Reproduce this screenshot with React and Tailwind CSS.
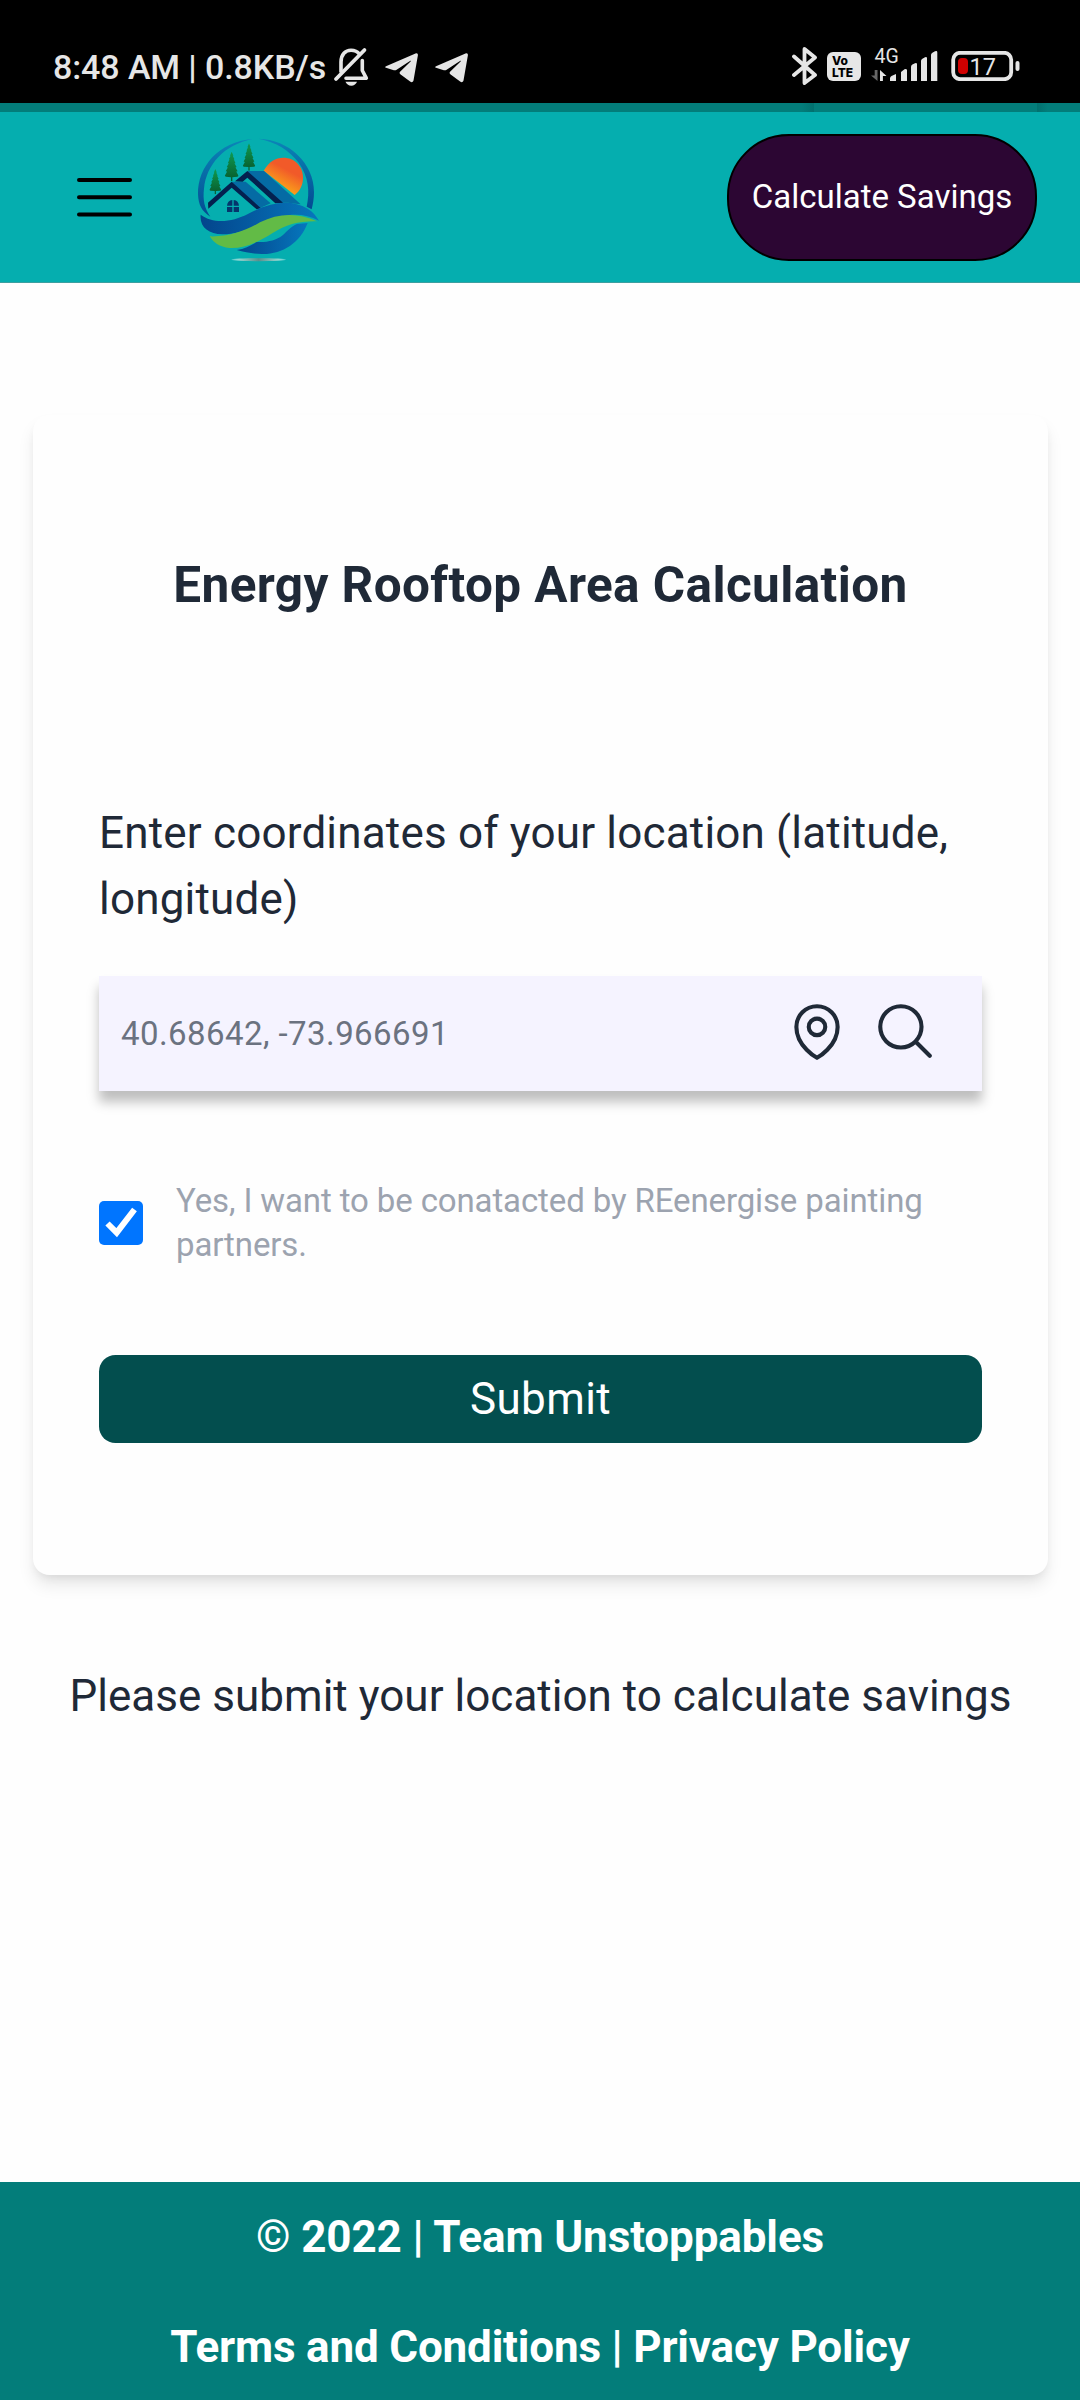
function Telegram() {
  return (
    <svg className="h-[32px] w-[35px]" viewBox="0 0 35 32" fill="#e6e6e6">
      <path d="M2 14.2 31.5 1.4c1.6-.6 2.6.2 2.4 1.9L29.6 28c-.4 2.2-1.8 2.7-3.5 1.5L16.300 22.300c-1-.8-1-1.700 0-2.700L26.600 9.600c.5-.7.100-1.100-.6-.7L12.600 17.800c-.9.6-1.800.7-2.800.4L2 15.800c-1.100-.4-1.100-1.100 0-1.600Z" />
    </svg>
  );
}

function MutedBell() {
  return (
    <svg className="h-[40px] w-[36px]" viewBox="0 0 36 40" fill="none" stroke="#e6e6e6" strokeWidth="3.600">
      <path d="M8 25.500V15C8 7.500 12.500 3.200 18 3.200c3.500 0 6.500 1.300 8.400 3.800" />
      <path d="M29.300 13.500v10l4 7.700H13" strokeLinejoin="round" strokeLinecap="round" />
      <path d="M3 32 31.500 3" strokeWidth="3.800" strokeLinecap="round" />
      <path d="M12.500 34.800h11.500c-.8 2.300-3 4-5.700 4s-5-1.700-5.800-4Z" fill="#e6e6e6" stroke="none" />
    </svg>
  );
}

function Signal() {
  return (
    <svg className="h-[38px] w-[67px]" viewBox="0 0 67 38" fill="#e6e6e6">
      <text x="3.500" y="17" fontSize="19.500" fontFamily="Roboto, sans-serif">4G</text>
      <path d="M6.500 24v11L0 29.500h3.700V24Z" fill="#666" />
      <path d="M9 35V24l6.500 6h-3.600v5Z" />
      <path d="M19 35v-2.500q0-1.500 1.500-2.400l4.500-2V35ZM30 35V26l3.500-2.700q2.200-1.200 2.500 1V35ZM40 35V21q0-1.700 1.400-2.400l2.600-1.400q2-.9 2 1.200V35ZM50 35V15q0-1.600 1.400-2.300l2.600-1.400q2-.9 2 1.200V35ZM60 35V9q0-1.600 1.400-2.300L64 5.300q2.300-.9 2.300 1.200V35Z" />
    </svg>
  );
}

function StatusBar() {
  return (
    <div className="flex h-[103px] items-start bg-black pt-[46px] text-[#e6e6e6]">
      <div className="ml-[53px] mt-[1px] w-[280px] whitespace-nowrap text-[34px] font-medium leading-[40px] tracking-[-0.1px]">8:48 AM | 0.8KB/s</div>
      <div className="mt-[1px]"><MutedBell /></div>
      <div className="ml-[15px] mt-[6px]"><Telegram /></div>
      <div className="ml-[14.500px] mt-[6px]"><Telegram /></div>
      <svg className="ml-[323px] h-[40px] w-[26px]" viewBox="0 0 26 40" fill="none" stroke="#e6e6e6" strokeWidth="3.800" strokeLinecap="round" strokeLinejoin="round">
        <path d="M2 10.500 23 29 12.500 37V3L23 11.500 2 29" />
      </svg>
      <div className="ml-[9px] mt-[6px] flex h-[29px] w-[34px] flex-col justify-center rounded-[6px] bg-[#e6e6e6] pl-[5.500px] font-['Inter'] text-[12px] font-extrabold leading-[12px] text-black">
        <span>Vo</span>
        <span>LTE</span>
      </div>
      <div className="ml-[10px]"><Signal /></div>
      <svg className="ml-[13px] mt-[5px] h-[30px] w-[70px]" viewBox="0 0 70 30">
        <rect x="2.200" y="1.800" width="58" height="26.400" rx="7" fill="none" stroke="#e6e6e6" strokeWidth="3.800" />
        <rect x="7" y="7" width="10" height="16" rx="4" fill="#d00000" />
        <rect x="64.500" y="10" width="4" height="10" rx="2" fill="#e6e6e6" />
        <text x="18.500" y="23.500" fontSize="23.500" fill="#e6e6e6" fontFamily="Roboto, sans-serif">17</text>
      </svg>
    </div>
  );
}

function Tree({ x, y, w, h }) {
  return (
    <svg x={x} y={y} width={w} height={h} viewBox="0 0 40 84" preserveAspectRatio="none">
      <path d="M20 0 25 12 23 12 28 22 26 22 31 33 28 33 34 44 31 45 37 56 33 57 40 70 36 72 22 73V84H18V73L4 72 0 70 7 57 3 56 9 45 6 44 12 33 9 33 14 22 12 22 17 12 15 12Z" fill="url(#tree)" />
    </svg>
  );
}

function Logo() {
  return (
    <svg className="size-[160px]" viewBox="0 0 480 480">
      <defs>
        <linearGradient id="tree" x1="0" y1="0" x2="0" y2="1">
          <stop offset="0" stopColor="#0f9a50" />
          <stop offset="1" stopColor="#075a2c" />
        </linearGradient>
        <linearGradient id="sun" x1="0.700" y1="0.200" x2="0.300" y2="0.900">
          <stop offset="0.200" stopColor="#f15a29" />
          <stop offset="1" stopColor="#fdb515" />
        </linearGradient>
        <linearGradient id="wave" x1="0" y1="0" x2="1" y2="0">
          <stop offset="0" stopColor="#03458c" />
          <stop offset="1" stopColor="#0677bd" />
        </linearGradient>
        <linearGradient id="ring" x1="0" y1="0" x2="0" y2="1">
          <stop offset="0" stopColor="#0b86b8" />
          <stop offset="1" stopColor="#034a92" />
        </linearGradient>
        <linearGradient id="ground" x1="0" y1="0" x2="1" y2="0">
          <stop offset="0" stopColor="#fff" stopOpacity="0.200" />
          <stop offset="0.150" stopColor="#8fd3ce" />
          <stop offset="0.500" stopColor="#5c8f8c" />
          <stop offset="0.850" stopColor="#8fd3ce" />
          <stop offset="1" stopColor="#fff" stopOpacity="0.200" />
        </linearGradient>
      </defs>
      <path d="M218 57C115 66 53 140 54 222c1 32 11 52 37 68-18-25-23-52-19-84 7-72 60-132 146-149Z" fill="url(#ring)" />
      <path d="M235 56c92 2 167 74 167 160 0 20-3 36-7 52l-15-8c10-46 6-90-24-132-29-38-67-62-121-72Z" fill="url(#ring)" />
      <path d="M251 152C268 124 286 113 310 113c34 0 59 26 59 60 0 21-8 38-25 52Z" fill="url(#sun)" />
      <Tree x="88" y="147" w="36" h="76" />
      <Tree x="134" y="95" w="42" h="88" />
      <Tree x="188" y="70" w="38" h="82" />
      <path d="M202 153H252L362 253C330 248 312 247 292 250Z" fill="#056ba4" />
      <path d="M155 185H197L272 250 232 268Z" fill="#056ba4" />
      <path d="M84 248 155 185 242 264 230 268 155 203 85 266ZM165 184 202 153 309 248 286 250 202 173 188 185Z" fill="#04204f" />
      <path d="M157 240V257H141C142 247 147 241 157 240ZM161 240c10 1 15 7 16 17H161ZM141 261H157V276H141ZM161 261H177V276H161Z" fill="#05356c" />
      <path d="M62 284C100 312 155 307 205 281c70-36 128-44 178-15 16 9 26 23 34 36-50-26-100-22-160 3-50 22-85 38-130 38-42-1-69-22-65-59Z" fill="url(#wave)" />
      <path d="M89 349C145 351 196 333 240 307c55-28 113-30 171-3-55-1-93 10-133 35-44 28-84 47-130 45-29-3-47-15-59-35Z" fill="#62bb46" />
      <path d="M383 309C360 370 305 404 245 402c-28-1-50-5-75-12 24-4 40-12 60-24 30 2 57-4 78-20 14-13 25-27 43-34Z" fill="url(#wave)" />
      <ellipse cx="236" cy="419" rx="82" ry="4.500" fill="url(#ground)" />
    </svg>
  );
}

function Header() {
  return (
    <header className="flex h-[171px] items-start border-b border-[#3d9fa0] bg-[#05aeaf]">
      <svg className="ml-[77px] mt-[65px] h-[41px] w-[55px]" viewBox="0 0 55 41" stroke="#000" strokeWidth="4" strokeLinecap="round">
        <path d="M2 3H53M2 20.300H53M2 37.500H53" />
      </svg>
      <div className="ml-[48px] mt-[8px]"><Logo /></div>
      <button className="ml-[387px] mt-[22px] h-[127px] w-[310px] whitespace-nowrap rounded-[62px] border-2 border-black bg-[#2c0633] pb-[2px] text-[33px] leading-[44px] text-white">Calculate Savings</button>
    </header>
  );
}

export default function App() {
  return (
    <div className="flex h-[2400px] w-[1080px] flex-col overflow-hidden bg-[#fefefe] font-['Roboto',sans-serif] text-[#1f2937]">
      <StatusBar />
      <div className="flex h-[9px] bg-[#037d7a]">
        <div className="w-[814px] bg-[linear-gradient(to_right,transparent_98.500%,#02706e)]" />
        <div className="w-[223px]" />
        <div className="flex-1 bg-[linear-gradient(to_right,#02706e,transparent_25%)]" />
      </div>
      <Header />
      <main className="flex flex-1 flex-col pl-[33px] pr-[32px] pt-[132px]">
        <section className="flex h-[1160px] flex-col rounded-[16.500px] bg-[#fefefe] px-[66px] pt-[132px] shadow-[0_11px_16.500px_-2.750px_rgba(0,0,0,0.100),0_5.500px_11px_-5.500px_rgba(0,0,0,0.100)]">
          <h1 className="text-center text-[49.500px] font-bold leading-[77px] tracking-[0.400px]">Energy Rooftop Area Calculation</h1>
          <label className="mt-[176px] text-[44px] leading-[66px] tracking-[0.180px]">Enter coordinates of your location (latitude, longitude)</label>
          <div className="mt-[44px] flex h-[115px] items-center bg-[#f5f3ff] pl-[22px] pr-[44px] shadow-[0_11px_11px_rgba(0,0,0,0.250)]">
            <span className="flex-1 text-[33px] leading-[44px] tracking-[0.430px] text-[#6b7280]">40.68642, -73.966691</span>
            <svg className="mb-[5px] size-[66px]" viewBox="0 0 24 24" fill="none" stroke="currentColor" strokeWidth="1.500" strokeLinecap="round" strokeLinejoin="round">
              <path d="M15 10.500a3 3 0 1 1-6 0 3 3 0 0 1 6 0Z" />
              <path d="M19.500 10.500c0 7.142-7.500 11.250-7.500 11.250S4.500 17.642 4.500 10.500a7.500 7.500 0 1 1 15 0Z" />
            </svg>
            <svg className="mb-[5px] ml-[22px] size-[66px]" viewBox="0 0 24 24" fill="none" stroke="currentColor" strokeWidth="1.500" strokeLinecap="round" strokeLinejoin="round">
              <path d="m21 21-5.197-5.197m0 0A7.500 7.500 0 1 0 5.196 5.196a7.500 7.500 0 0 0 10.607 10.607Z" />
            </svg>
          </div>
          <div className="mt-[88px] flex items-center">
            <div className="flex size-[44px] items-center justify-center rounded-[5px] bg-[#0075ff]">
              <svg className="size-[44px]" viewBox="0 0 44 44" fill="none" stroke="#fff" strokeWidth="6">
                <path d="m8.500 22.500 9.200 9.200L35.500 8.500" />
              </svg>
            </div>
            <p className="ml-[33px] flex-1 text-[33px] leading-[44px] tracking-[-0.120px] text-[#9ca3af]">Yes, I want to be conatacted by REenergise painting partners.</p>
          </div>
          <button className="mt-[88px] h-[88px] rounded-[16.500px] bg-[#034e4e] text-[44px] leading-[66px] tracking-[0.400px] text-white">Submit</button>
        </section>
        <p className="mt-[88px] text-center text-[44px] leading-[66px] tracking-[0.020px]">Please submit your location to calculate savings</p>
      </main>
      <footer className="flex h-[218px] flex-col gap-[44px] bg-[#037d7a] pt-[22px] text-center text-[44px] font-bold leading-[66px] text-white">
        <p className="tracking-[-0.120px]">© 2022 | Team Unstoppables</p>
        <p className="tracking-[-0.180px]">Terms and Conditions | Privacy Policy</p>
      </footer>
    </div>
  );
}
